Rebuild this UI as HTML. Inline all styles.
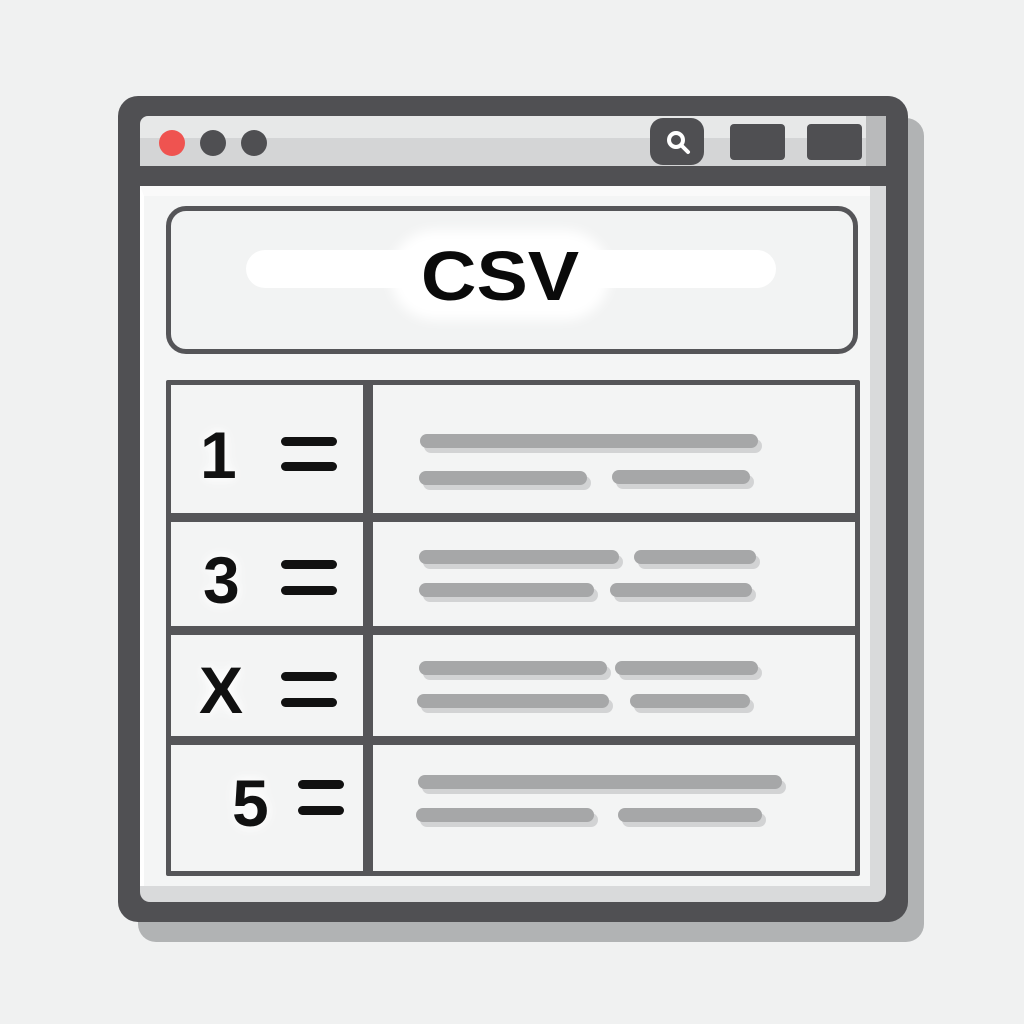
<!DOCTYPE html>
<html><head><style>
body{margin:0;width:1024px;height:1024px;background:#f0f1f1;position:relative;overflow:hidden;font-family:"Liberation Sans",sans-serif}
div{position:absolute;box-sizing:border-box}
.bar{height:14px;border-radius:7px;background:#a6a7a8;box-shadow:4px 5px 0 #d2d3d4}
.lbl{font-weight:bold;font-size:66px;line-height:68px;color:#111;text-shadow:0 0 10px #fff,0 0 16px #fff}
.eq{height:9px;border-radius:5px;background:#111}
</style></head><body>
<div style="left:138px;top:118px;width:786px;height:824px;background:#b1b3b4;border-radius:18px"></div>
<div style="left:118px;top:96px;width:790px;height:826px;background:#505053;border-radius:20px"></div>
<div style="left:140px;top:116px;width:746px;height:50px;background:#e7e8e8;border-radius:8px 8px 0 0"></div>
<div style="left:140px;top:138px;width:746px;height:28px;background:#d4d5d6"></div>
<div style="left:866px;top:116px;width:20px;height:50px;background:#b9babb"></div>
<div style="left:159px;top:130px;width:26px;height:26px;border-radius:50%;background:#ef5350"></div>
<div style="left:200px;top:130px;width:26px;height:26px;border-radius:50%;background:#4f4f52"></div>
<div style="left:241px;top:130px;width:26px;height:26px;border-radius:50%;background:#4f4f52"></div>
<div style="left:650px;top:118px;width:54px;height:47px;border-radius:13px;background:#4f4f52">
<svg width="54" height="47" viewBox="0 0 54 47"><circle cx="26" cy="22" r="7" fill="none" stroke="#fff" stroke-width="4"/><line x1="31" y1="27" x2="38" y2="34" stroke="#fff" stroke-width="4" stroke-linecap="round"/></svg></div>
<div style="left:730px;top:124px;width:55px;height:36px;border-radius:4px;background:#4f4f52"></div>
<div style="left:807px;top:124px;width:55px;height:36px;border-radius:4px;background:#4f4f52"></div>
<div style="left:140px;top:186px;width:746px;height:716px;background:#d9dadb;border-radius:0 0 10px 10px"></div>
<div style="left:140px;top:186px;width:730px;height:700px;background:#f4f5f5;border-left:4px solid #fff;border-top:10px solid #fafafa"></div>
<div style="left:166px;top:206px;width:692px;height:148px;border:5px solid #555558;border-radius:20px;background:#f2f3f3"></div>
<div style="left:246px;top:250px;width:530px;height:38px;border-radius:19px;background:#fff"></div>
<div style="left:390px;top:230px;width:220px;height:90px;border-radius:45px;background:#fff;filter:blur(6px)"></div>
<div style="left:390px;top:236px;width:220px;text-align:center;font-weight:bold;font-size:70px;line-height:80px;color:#0a0a0a;transform:scaleX(1.1)">CSV</div>
<div style="left:166px;top:380px;width:694px;height:496px;border:5px solid #555558;border-radius:2px;background:#f3f4f4"></div>
<div style="left:363px;top:380px;width:10px;height:496px;background:#555558"></div>
<div style="left:166px;top:513px;width:694px;height:9px;background:#555558"></div>
<div style="left:166px;top:626px;width:694px;height:9px;background:#555558"></div>
<div style="left:166px;top:736px;width:694px;height:9px;background:#555558"></div>
<div class="lbl" style="left:200px;top:421px">1</div>
<div class="eq" style="left:281px;top:437px;width:56px"></div><div class="eq" style="left:281px;top:462px;width:56px"></div>
<div class="lbl" style="left:203px;top:546px">3</div>
<div class="eq" style="left:281px;top:560px;width:56px"></div><div class="eq" style="left:281px;top:586px;width:56px"></div>
<div class="lbl" style="left:199px;top:656px">X</div>
<div class="eq" style="left:281px;top:672px;width:56px"></div><div class="eq" style="left:281px;top:698px;width:56px"></div>
<div class="lbl" style="left:232px;top:769px">5</div>
<div class="eq" style="left:298px;top:780px;width:46px"></div><div class="eq" style="left:298px;top:806px;width:46px"></div>
<div class="bar" style="left:420px;top:434px;width:338px"></div>
<div class="bar" style="left:419px;top:471px;width:168px"></div>
<div class="bar" style="left:612px;top:470px;width:138px"></div>
<div class="bar" style="left:419px;top:550px;width:200px"></div>
<div class="bar" style="left:634px;top:550px;width:122px"></div>
<div class="bar" style="left:419px;top:583px;width:175px"></div>
<div class="bar" style="left:610px;top:583px;width:142px"></div>
<div class="bar" style="left:419px;top:661px;width:188px"></div>
<div class="bar" style="left:615px;top:661px;width:143px"></div>
<div class="bar" style="left:417px;top:694px;width:192px"></div>
<div class="bar" style="left:630px;top:694px;width:120px"></div>
<div class="bar" style="left:418px;top:775px;width:364px"></div>
<div class="bar" style="left:416px;top:808px;width:178px"></div>
<div class="bar" style="left:618px;top:808px;width:144px"></div>
</body></html>
